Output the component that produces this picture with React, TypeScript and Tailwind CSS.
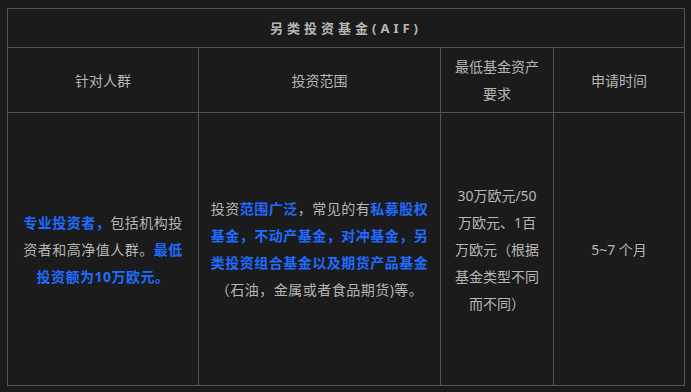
import React from "react";

const B = ({ children }: { children: React.ReactNode }) => (
  <span className="font-bold text-[#1f6bff]">{children}</span>
);

export default function App() {
  const cell = "border border-[#535353] text-center align-middle";
  return (
    <div
      className="min-h-[392px] w-[691px] bg-[#1b1b1b] pl-[7px] pt-[8px] text-[#b6b6b6]"
      style={{ fontFamily: '"Noto Sans", "Noto Sans CJK SC", sans-serif' }}
    >
      <table className="w-[677px] table-fixed border-collapse text-[14px] leading-[27px]">
        <colgroup>
          <col className="w-[191px]" />
          <col className="w-[242px]" />
          <col className="w-[113px]" />
          <col className="w-[131px]" />
        </colgroup>
        <tbody>
          <tr className="h-[39px]">
            <td colSpan={4} className={`${cell} text-[13px] font-bold tracking-[4px]`}>
              另类投资基金(AIF)
            </td>
          </tr>
          <tr className="h-[65px]">
            <td className={cell}>针对人群</td>
            <td className={cell}>投资范围</td>
            <td className={`${cell} px-[10px]`}>最低基金资产要求</td>
            <td className={cell}>申请时间</td>
          </tr>
          <tr className="h-[273px]">
            <td className={`${cell} px-[15px] tracking-[0.5px]`}>
              <B>专业投资者，</B>包括机构投资者和高净值人群。<B>最低投资额为10万欧元。</B>
            </td>
            <td className={`${cell} px-[11px] tracking-[0.5px]`}>
              投资<B>范围广泛</B>，常见的有<B>私募股权基金，不动产基金，对冲基金，另类投资组合基金以及期货产品基金</B>（石油，金属或者食品期货)等。
            </td>
            <td className={`${cell} px-[12px]`}>
              30万欧元/50万欧元、1百万欧元（根据基金类型不同而不同）
            </td>
            <td className={cell}>5~7 个月</td>
          </tr>
        </tbody>
      </table>
    </div>
  );
}
